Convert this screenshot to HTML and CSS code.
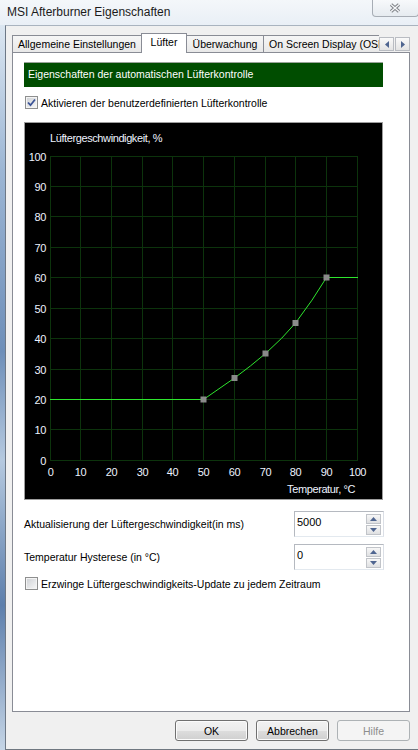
FILE: index.html
```html
<!DOCTYPE html>
<html lang="de">

<head>
    <meta charset="UTF-8">
    <title>MSI Afterburner Eigenschaften</title>
    <link rel="stylesheet" href="styles.css">
</head>

<body>
    <div class="window">
        <div class="titlebar">
            <span class="title">MSI Afterburner Eigenschaften</span>
            <div class="close-btn">
                <svg width="12" height="10" viewBox="0 0 12 10">
                    <path d="M2 1.5L10 8.5M10 1.5L2 8.5" stroke="#7f8388" stroke-width="3.4" fill="none"/>
                    <path d="M2 1.5L10 8.5M10 1.5L2 8.5" stroke="#f7f8fa" stroke-width="1.3" fill="none"/>
                </svg>
            </div>
        </div>

        <div class="frame">
            <div class="glass-edge"></div>
            <div class="client">

                <div class="tabs">
                    <div class="tab-list">
                        <div class="tab tab-general">Allgemeine Einstellungen</div>
                        <div class="tab tab-fan active">Lüfter</div>
                        <div class="tab tab-monitor">Überwachung</div>
                        <div class="tab tab-osd">On Screen Display (OSD)</div>
                    </div>
                    <div class="tab-scroll">
                        <div class="scroll-btn">
                            <svg width="4" height="7" viewBox="0 0 4 7"><path d="M4 0V7L0 3.5Z" fill="#4f6590"/></svg>
                        </div>
                        <div class="scroll-btn">
                            <svg width="4" height="7" viewBox="0 0 4 7"><path d="M0 0V7L4 3.5Z" fill="#4f6590"/></svg>
                        </div>
                    </div>
                </div>

                <div class="panel">
                    <div class="group-title">Eigenschaften der automatischen Lüfterkontrolle</div>

                    <div class="check-row">
                        <span class="checkbox">
                            <svg width="11" height="11" viewBox="0 0 11 11"><path d="M2 5.5L4.5 8.2L9 2.5" stroke="#3b5396" stroke-width="1.8" fill="none"/></svg>
                        </span>
                        Aktivieren der benutzerdefinierten Lüfterkontrolle
                    </div>

                    <div class="chart">
                        <svg width="357" height="376" viewBox="0 0 357 376">
                            <!-- grid, 10 steps each way -->
                            <path class="grid" d="M25.5 33V338M55.5 33V338M86.5 33V338M117.5 33V338M147.5 33V338M178.5 33V338M209.5 33V338M240.5 33V338M270.5 33V338M301.5 33V338M332.5 33V338
                                M25 33.5H333M25 63.5H333M25 93.5H333M25 124.5H333M25 154.5H333M25 185.5H333M25 215.5H333M25 246.5H333M25 276.5H333M25 306.5H333M25 337.5H333"/>

                            <text class="axis-title" x="25" y="19">Lüftergeschwindigkeit, %</text>

                            <g class="y-labels">
                                <text x="21" y="37.5">100</text>
                                <text x="21" y="67.5">90</text>
                                <text x="21" y="97.5">80</text>
                                <text x="21" y="128.5">70</text>
                                <text x="21" y="158.5">60</text>
                                <text x="21" y="189.5">50</text>
                                <text x="21" y="219.5">40</text>
                                <text x="21" y="250.5">30</text>
                                <text x="21" y="280.5">20</text>
                                <text x="21" y="310.5">10</text>
                                <text x="21" y="341.5">0</text>
                            </g>

                            <g class="x-labels">
                                <text x="25.5" y="353">0</text>
                                <text x="55.5" y="353">10</text>
                                <text x="86.5" y="353">20</text>
                                <text x="117.5" y="353">30</text>
                                <text x="147.5" y="353">40</text>
                                <text x="178.5" y="353">50</text>
                                <text x="209.5" y="353">60</text>
                                <text x="240.5" y="353">70</text>
                                <text x="270.5" y="353">80</text>
                                <text x="301.5" y="353">90</text>
                                <text x="332.5" y="353">100</text>
                            </g>

                            <text class="axis-title axis-end" x="330" y="370">Temperatur, °C</text>

                            <!-- fan curve -->
                            <path class="curve" d="M25 276.5H178.5L209.5 255Q226 243 240.5 230.5Q258 215 270.5 200Q288 177 301.5 154.5H333"/>
                            <g class="points">
                                <rect x="175.5" y="273.5" width="6" height="6"/>
                                <rect x="206.5" y="252" width="6" height="6"/>
                                <rect x="237.5" y="227.5" width="6" height="6"/>
                                <rect x="267.5" y="197" width="6" height="6"/>
                                <rect x="298.5" y="151.5" width="6" height="6"/>
                            </g>
                        </svg>
                    </div>

                    <div class="field-row">
                        <span>Aktualisierung der Lüftergeschwindigkeit(in ms)</span>
                        <div class="spinbox">
                            <span class="spin-value">5000</span>
                            <div class="spin-buttons">
                                <div class="spin-btn"><svg width="7" height="4" viewBox="0 0 7 4"><path d="M0 4H7L3.5 0Z" fill="#4f6590"/></svg></div>
                                <div class="spin-btn"><svg width="7" height="4" viewBox="0 0 7 4"><path d="M0 0H7L3.5 4Z" fill="#4f6590"/></svg></div>
                            </div>
                        </div>
                    </div>

                    <div class="field-row">
                        <span>Temperatur Hysterese (in °C)</span>
                        <div class="spinbox">
                            <span class="spin-value">0</span>
                            <div class="spin-buttons">
                                <div class="spin-btn"><svg width="7" height="4" viewBox="0 0 7 4"><path d="M0 4H7L3.5 0Z" fill="#4f6590"/></svg></div>
                                <div class="spin-btn"><svg width="7" height="4" viewBox="0 0 7 4"><path d="M0 0H7L3.5 4Z" fill="#4f6590"/></svg></div>
                            </div>
                        </div>
                    </div>

                    <div class="check-row check-last">
                        <span class="checkbox"></span>
                        Erzwinge Lüftergeschwindigkeits-Update zu jedem Zeitraum
                    </div>
                </div>

                <div class="buttons">
                    <button>OK</button>
                    <button>Abbrechen</button>
                    <button disabled>Hilfe</button>
                </div>
            </div>
        </div>
    </div>
</body>

</html>
```

FILE: styles.css
```css
* {
    box-sizing: border-box;
}

body {
    margin: 0;
    width: 418px;
    height: 750px;
    overflow: hidden;
    font-family: "Liberation Sans", Arial, sans-serif;
    font-size: 10.5px;
    color: #000;
    background: #e6edf5;
}

.window {
    display: flex;
    flex-direction: column;
    height: 750px;
}

/* glass title bar */
.titlebar {
    height: 25px;
    display: flex;
    align-items: flex-start;
    background: linear-gradient(#f4f7fa, #e9eff6);
}

.title {
    margin: 5px 0 0 7px;
    font-size: 12px;
    line-height: 14px;
    color: #1b1b1b;
}

.close-btn {
    margin-left: auto;
    margin-right: -1px;
    width: 47px;
    height: 17px;
    display: flex;
    align-items: center;
    justify-content: center;
    padding-right: 2px;
    border: 1px solid #a7adb5;
    border-top: none;
    border-radius: 0 0 4px 4px;
    background: linear-gradient(#f7f9fb, #e6ebf0);
}

.frame {
    flex: 1;
    display: flex;
    min-width: 0;
}

.glass-edge {
    flex: none;
    width: 5px;
    background: linear-gradient(#dbe6f1, #9cb6d4 20%, #6e8fb9 45%, #b5c9df 60%, #5d7fac 80%, #c5d5e6);
}

.client {
    flex: 1;
    min-width: 0;
    display: flex;
    flex-direction: column;
    padding: 0 8px 0 6px;
    background: #f0f0f0;
    border-left: 1px solid #6d7886;
    border-top: 1px solid #a9b3bf;
    border-bottom: 1px solid #6f7780;
}

/* tab strip */
.tabs {
    display: flex;
    align-items: flex-end;
    height: 20px;
    margin-top: 7px;
    margin-bottom: -1px;
    position: relative;
    z-index: 1;
}

.tab-list {
    flex: 1;
    min-width: 0;
    display: flex;
    align-items: flex-end;
    height: 20px;
    overflow: hidden;
}

.tab {
    flex: none;
    height: 17px;
    margin-bottom: 1px;
    margin-left: -1px;
    line-height: 16px;
    text-align: center;
    white-space: nowrap;
    border: 1px solid #898c95;
    border-bottom: none;
    background: linear-gradient(#f6f6f6, #e8e8e8);
}

.tab:first-child {
    margin-left: 0;
}

.tab.active {
    height: 20px;
    margin-bottom: 0;
    padding-bottom: 3px;
    background: #fff;
}

.tab-general {
    width: 130px;
}

.tab-fan {
    width: 46px;
}

.tab-monitor {
    width: 78px;
}

.tab-osd {
    width: 125px;
    text-align: left;
    padding-left: 5px;
}

.tab-scroll {
    flex: none;
    display: flex;
    gap: 1px;
    margin-bottom: 2px;
}

.scroll-btn {
    width: 15px;
    height: 14px;
    display: flex;
    align-items: center;
    justify-content: center;
    border: 1px solid #b9bcc2;
    background: linear-gradient(#fafafa, #e4e4e4);
}

/* property page */
.panel {
    height: 660px;
    padding: 9px 0 0 11px;
    background: #fff;
    border: 1px solid #898c95;
}

.group-title {
    width: 359px;
    height: 25px;
    padding-left: 4px;
    line-height: 23px;
    color: #fff;
    background: #004d00;
    border-top: 1px solid #9aa39a;
}

.check-row {
    display: flex;
    align-items: center;
    gap: 3px;
    height: 13px;
    margin-top: 9px;
    padding-left: 1px;
}

.checkbox {
    flex: none;
    width: 13px;
    height: 13px;
    display: flex;
    align-items: center;
    justify-content: center;
    border: 1px solid #8e8f8f;
    background: linear-gradient(135deg, #cdd0d4, #f8f8f8);
    box-shadow: inset 0 0 0 1px #f4f4f4;
}

.chart {
    width: 359px;
    height: 378px;
    margin-top: 13px;
    background: #000;
    border: 1px solid #9d9d9d;
}

.chart svg {
    display: block;
}

.grid {
    stroke: #0c330c;
    stroke-width: 1;
    fill: none;
}

.chart text {
    font-family: "Liberation Sans", Arial, sans-serif;
    font-size: 11px;
    letter-spacing: -0.4px;
    fill: #eef3ff;
}

.y-labels text,
.axis-end {
    text-anchor: end;
}

.x-labels text {
    text-anchor: middle;
}

.curve {
    stroke: #2ee62e;
    stroke-width: 1;
    fill: none;
}

.points rect {
    fill: #8a8a8a;
}

.field-row {
    width: 360px;
    display: flex;
    align-items: center;
    justify-content: space-between;
    margin-top: 11px;
}

.field-row + .field-row {
    margin-top: 7px;
}

.spinbox {
    flex: none;
    width: 90px;
    height: 26px;
    display: flex;
    background: #fff;
    border: 1px solid #b5b9c0;
    border-right-color: #dbdfe6;
    border-bottom-color: #e3e9ef;
}

.spin-value {
    flex: 1;
    padding: 4px 0 0 2px;
    font-size: 11px;
}

.spin-buttons {
    display: flex;
    flex-direction: column;
    gap: 1px;
    padding: 2px 2px 0 0;
}

.spin-btn {
    width: 15px;
    height: 10px;
    display: flex;
    align-items: center;
    justify-content: center;
    border: 1px solid #c1c4c9;
    background: linear-gradient(#f7f7f7, #dfe0e2);
}

.check-last {
    margin-top: 7px;
}

/* dialog buttons */
.buttons {
    display: flex;
    justify-content: flex-end;
    gap: 8px;
    margin-top: 8px;
}

button {
    width: 73px;
    height: 21px;
    padding: 0;
    font-family: "Liberation Sans", Arial, sans-serif;
    font-size: 10.5px;
    color: #000;
    border: 1px solid #707070;
    border-radius: 3px;
    background: linear-gradient(#f2f2f2 0%, #ebebeb 50%, #dddddd 51%, #cfcfcf 100%);
    box-shadow: inset 0 0 0 1px #fbfbfb;
}

button:disabled {
    color: #8d8d8d;
    border-color: #adb2b5;
    background: #f4f4f4;
    box-shadow: none;
}
```
